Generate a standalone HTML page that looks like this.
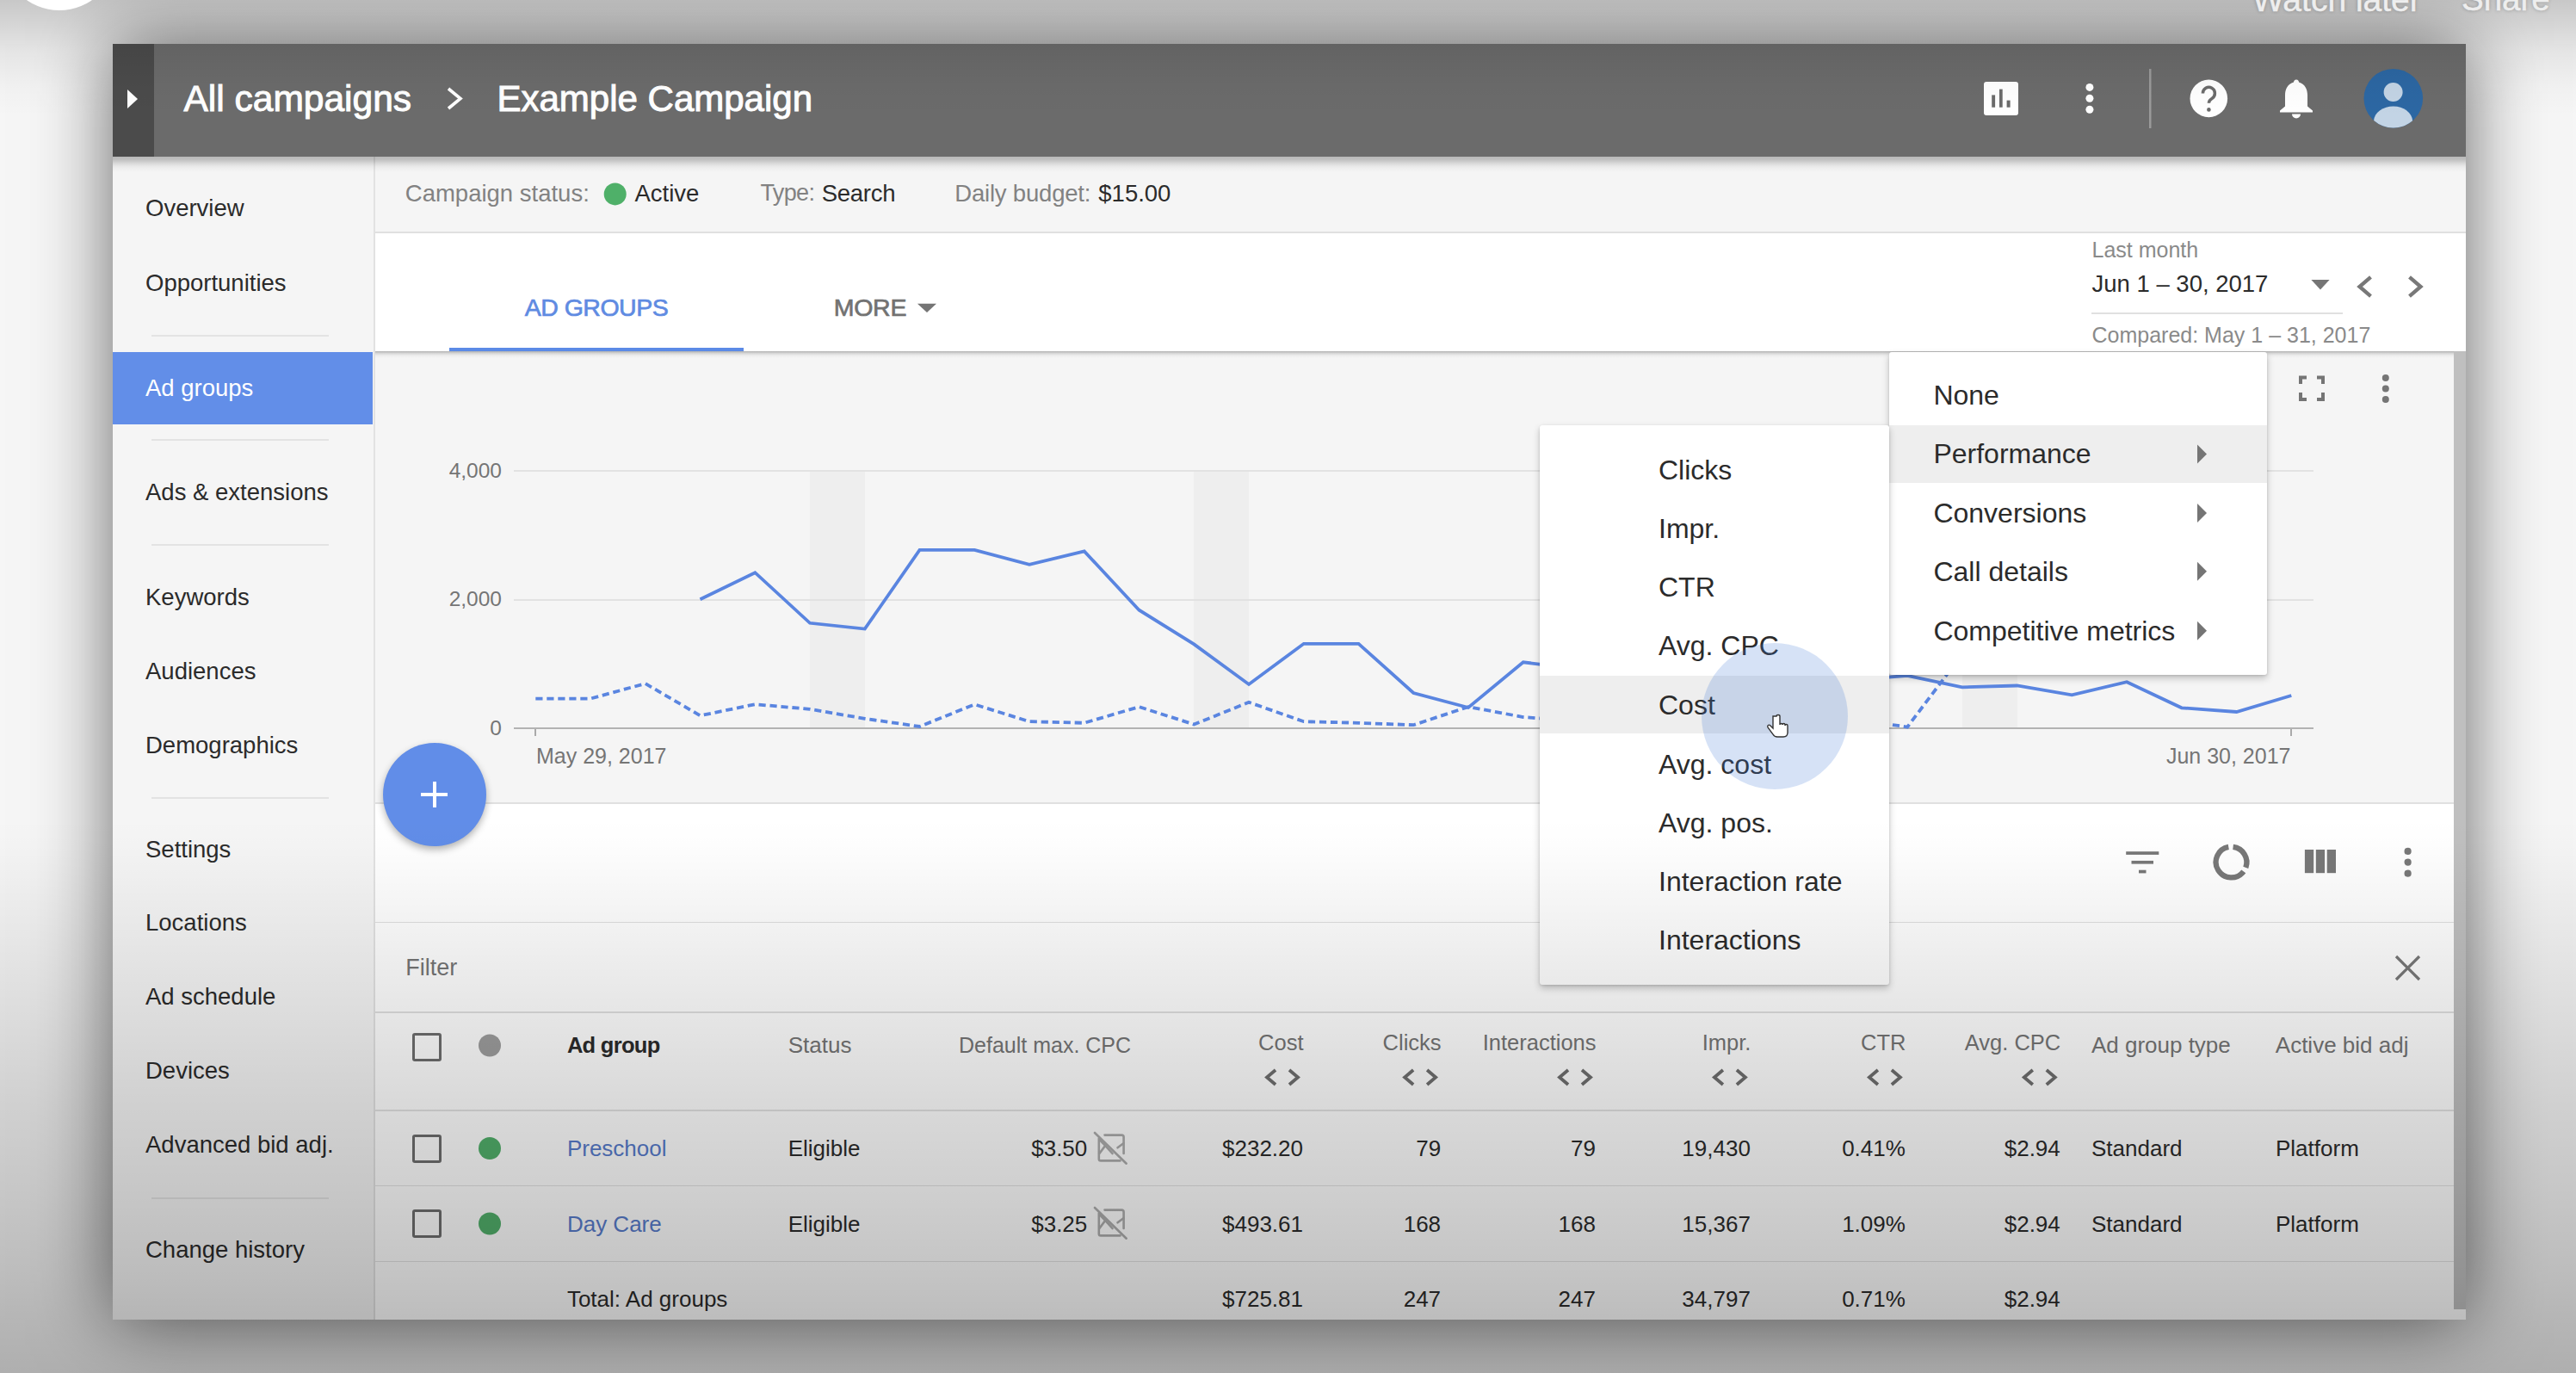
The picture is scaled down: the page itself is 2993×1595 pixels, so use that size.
<!DOCTYPE html><html><head><meta charset="utf-8"><style>
html,body{margin:0;padding:0;}
body{width:2993px;height:1595px;overflow:hidden;position:relative;background:#f6f6f6;font-family:"Liberation Sans",sans-serif;}
.t{position:absolute;line-height:1;white-space:nowrap;}
.r{position:absolute;}
svg{position:absolute;overflow:visible;}
</style></head><body>
<div class="r" style="left:131px;top:51px;width:2734px;height:1482px;background:#fff;box-shadow:0 0 84px rgba(0,0,0,0.59);"></div>
<div class="r" style="left:131px;top:51px;width:2734px;height:132px;background:#6b6b6b;"></div>
<div class="r" style="left:131px;top:51px;width:48px;height:132px;background:#4b4b4b;"></div>
<div class="r" style="left:131px;top:182px;width:303px;height:1351px;background:#f5f5f5;"></div>
<div class="r" style="left:434.3px;top:182px;width:1.5px;height:1351px;background:#e2e2e2;"></div>
<div class="r" style="left:436px;top:182px;width:2429px;height:88px;background:#f5f5f5;"></div>
<div class="r" style="left:436px;top:269px;width:2429px;height:2px;background:#e0e0e0;"></div>
<div class="r" style="left:436px;top:271px;width:2429px;height:137px;background:#ffffff;"></div>
<div class="r" style="left:436px;top:408px;width:2415px;height:525px;background:#f5f5f5;"></div>
<div class="r" style="left:436px;top:932px;width:2415px;height:2px;background:#e0e0e0;"></div>
<div class="r" style="left:436px;top:934px;width:2415px;height:137px;background:#ffffff;"></div>
<div class="r" style="left:436px;top:1071px;width:2415px;height:1.7999999999999545px;background:#e0e0e0;"></div>
<div class="r" style="left:436px;top:1072px;width:2415px;height:104px;background:#ffffff;"></div>
<div class="r" style="left:436px;top:1175px;width:2415px;height:2px;background:#e0e0e0;"></div>
<div class="r" style="left:436px;top:1177px;width:2415px;height:356px;background:#ffffff;"></div>
<div class="r" style="left:436px;top:1289px;width:2415px;height:1.599999999999909px;background:#e3e3e3;"></div>
<div class="r" style="left:436px;top:1376.5px;width:2415px;height:1.599999999999909px;background:#e3e3e3;"></div>
<div class="r" style="left:436px;top:1464.5px;width:2415px;height:1.599999999999909px;background:#e3e3e3;"></div>
<div class="r" style="left:2851px;top:408px;width:14px;height:1113px;background:#bfbfbf;"></div>
<div class="r" style="left:131px;top:182px;width:2734px;height:19px;background:linear-gradient(rgba(0,0,0,0.25),rgba(0,0,0,0.22) 3px,rgba(0,0,0,0.185) 5px,rgba(0,0,0,0.135) 7px,rgba(0,0,0,0.09) 9px,rgba(0,0,0,0.055) 11px,rgba(0,0,0,0.03) 13px,rgba(0,0,0,0.01) 16px,rgba(0,0,0,0) 19px);"></div>
<div class="r" style="left:436px;top:408px;width:2415px;height:8px;background:linear-gradient(rgba(0,0,0,0.28),rgba(0,0,0,0.12) 2.5px,rgba(0,0,0,0.03) 5px,rgba(0,0,0,0) 8px);"></div>
<svg style="left:0;top:0" width="1" height="1"><polygon points="148,104 160,115 148,126" fill="#fff"/></svg>
<div class="t" style="left:213.5px;top:93.9px;font-size:42.5px;color:#fff;font-weight:normal;-webkit-text-stroke:1px #fff;">All campaigns</div>
<svg style="left:0;top:0" width="1" height="1"><polyline points="521,103 535,114.5 521,126" fill="none" stroke="#fff" stroke-width="3.6"/></svg>
<div class="t" style="left:577.5px;top:94.4px;font-size:42px;color:#fff;font-weight:normal;-webkit-text-stroke:1px #fff;">Example Campaign</div>
<svg style="left:0;top:0" width="1" height="1">
<rect x="2305" y="95" width="40" height="39" rx="3" fill="#fff"/>
<rect x="2314.2" y="110.4" width="3.9" height="14.3" fill="#6b6b6b"/>
<rect x="2323" y="103.6" width="3.7" height="21.1" fill="#6b6b6b"/>
<rect x="2331.6" y="116.6" width="4" height="8.1" fill="#6b6b6b"/>
<circle cx="2427.9" cy="101.4" r="4.5" fill="#fff"/><circle cx="2427.9" cy="114.3" r="4.5" fill="#fff"/><circle cx="2427.9" cy="127.2" r="4.5" fill="#fff"/>
<rect x="2497" y="80" width="2.5" height="69" fill="#9a9a9a"/>
<circle cx="2566.3" cy="114.4" r="21.8" fill="#fff"/>
<path d="M2559.4 108.4 a7 7 0 1 1 10.6 6 c-2.3 1.4 -3.6 2.6 -3.6 5.4" fill="none" stroke="#6b6b6b" stroke-width="3.5"/>
<circle cx="2566.4" cy="127.4" r="2.3" fill="#6b6b6b"/>
<path d="M2668 92.5 c2 0 3 1.5 3 3 c7 2 10 8 10 15 v13 l6 5 v2 h-38 v-2 l6 -5 v-13 c0 -7 3 -13 10 -15 c0 -1.5 1 -3 3 -3z" fill="#fff"/>
<path d="M2663 132.5 h10 a5 5 0 0 1 -10 0z" fill="#fff"/>
<circle cx="2780.8" cy="114.3" r="34.3" fill="#2c67a3"/>
<circle cx="2780.6" cy="107" r="11" fill="#c3d4e5"/><path d="M2758.13 140.04 A22.5 17.5 0 0 1 2803.09 140.37 A34.3 34.3 0 0 1 2758.13 140.04Z" fill="#c3d4e5"/>
</svg>
<div class="t" style="left:169.0px;top:228.0px;font-size:27.5px;color:#2b2b2b;font-weight:normal;">Overview</div>
<div class="t" style="left:169.0px;top:314.7px;font-size:27.5px;color:#2b2b2b;font-weight:normal;">Opportunities</div>
<div class="t" style="left:169.0px;top:557.7px;font-size:27.5px;color:#2b2b2b;font-weight:normal;">Ads &amp; extensions</div>
<div class="t" style="left:169.0px;top:680.4px;font-size:27.5px;color:#2b2b2b;font-weight:normal;">Keywords</div>
<div class="t" style="left:169.0px;top:766.2px;font-size:27.5px;color:#2b2b2b;font-weight:normal;">Audiences</div>
<div class="t" style="left:169.0px;top:851.7px;font-size:27.5px;color:#2b2b2b;font-weight:normal;">Demographics</div>
<div class="t" style="left:169.0px;top:972.6px;font-size:27.5px;color:#2b2b2b;font-weight:normal;">Settings</div>
<div class="t" style="left:169.0px;top:1058.4px;font-size:27.5px;color:#2b2b2b;font-weight:normal;">Locations</div>
<div class="t" style="left:169.0px;top:1144.2px;font-size:27.5px;color:#2b2b2b;font-weight:normal;">Ad schedule</div>
<div class="t" style="left:169.0px;top:1230.0px;font-size:27.5px;color:#2b2b2b;font-weight:normal;">Devices</div>
<div class="t" style="left:169.0px;top:1315.7px;font-size:27.5px;color:#2b2b2b;font-weight:normal;">Advanced bid adj.</div>
<div class="t" style="left:169.0px;top:1437.7px;font-size:27.5px;color:#2b2b2b;font-weight:normal;">Change history</div>
<div class="r" style="left:131px;top:409px;width:302px;height:84px;background:#628ee8;"></div>
<div class="t" style="left:169.0px;top:436.7px;font-size:27.5px;color:#fff;font-weight:normal;">Ad groups</div>
<div class="r" style="left:176px;top:389px;width:206px;height:2px;background:#e3e3e3;"></div>
<div class="r" style="left:176px;top:510px;width:206px;height:2px;background:#e3e3e3;"></div>
<div class="r" style="left:176px;top:632px;width:206px;height:2px;background:#e3e3e3;"></div>
<div class="r" style="left:176px;top:926px;width:206px;height:2px;background:#e3e3e3;"></div>
<div class="r" style="left:176px;top:1391px;width:206px;height:2px;background:#e3e3e3;"></div>
<div class="t" style="left:470.8px;top:210.9px;font-size:27.5px;color:#828282;font-weight:normal;">Campaign status:</div>
<svg style="left:0;top:0" width="1" height="1"><circle cx="714.7" cy="225.4" r="13" fill="#4fb069"/></svg>
<div class="t" style="left:737.5px;top:210.9px;font-size:27.5px;color:#2b2b2b;font-weight:normal;">Active</div>
<div class="t" style="left:883.4px;top:211.3px;font-size:27px;color:#828282;font-weight:normal;letter-spacing:-0.6px;">Type:</div>
<div class="t" style="left:954.8px;top:210.9px;font-size:27.5px;color:#2b2b2b;font-weight:normal;letter-spacing:-0.3px;">Search</div>
<div class="t" style="left:1109.3px;top:210.9px;font-size:27.5px;color:#828282;font-weight:normal;letter-spacing:-0.2px;">Daily budget:</div>
<div class="t" style="left:1276.3px;top:210.9px;font-size:27.5px;color:#2b2b2b;font-weight:normal;">$15.00</div>
<div class="t" style="left:609.7px;top:342.9px;font-size:28.5px;color:#5f8be2;font-weight:normal;-webkit-text-stroke:0.7px #5f8be2;letter-spacing:-0.5px;">AD GROUPS</div>
<div class="t" style="left:968.8px;top:342.9px;font-size:28.5px;color:#727272;font-weight:normal;-webkit-text-stroke:0.7px #727272;letter-spacing:-0.3px;">MORE</div>
<svg style="left:0;top:0" width="1" height="1"><polygon points="1065.9,352.7 1088,352.7 1077,363" fill="#757575"/></svg>
<div class="r" style="left:522px;top:404px;width:342px;height:4px;background:#5b8ae6;"></div>
<div class="t" style="left:2430.5px;top:277.7px;font-size:25px;color:#8a8a8a;font-weight:normal;">Last month</div>
<div class="t" style="left:2430.5px;top:315.5px;font-size:27.5px;color:#2b2b2b;font-weight:normal;">Jun 1 – 30, 2017</div>
<svg style="left:0;top:0" width="1" height="1"><polygon points="2685.4,325 2706.6,325 2696,336.6" fill="#757575"/><polyline points="2754.5,321.8 2741.5,333 2754.5,344.2" fill="none" stroke="#787878" stroke-width="4.3"/><polyline points="2799.5,321.8 2812.5,333 2799.5,344.2" fill="none" stroke="#787878" stroke-width="4.3"/></svg>
<div class="r" style="left:2430px;top:363px;width:292px;height:2px;background:#e0e0e0;"></div>
<div class="t" style="left:2430.5px;top:377.4px;font-size:25px;color:#8a8a8a;font-weight:normal;">Compared: May 1 – 31, 2017</div>
<div class="r" style="left:941px;top:547px;width:64px;height:299px;background:#eeeeee;"></div>
<div class="r" style="left:1387px;top:547px;width:64px;height:299px;background:#eeeeee;"></div>
<div class="r" style="left:1834px;top:547px;width:63px;height:299px;background:#eeeeee;"></div>
<div class="r" style="left:2280px;top:547px;width:64px;height:299px;background:#eeeeee;"></div>
<div class="r" style="left:597px;top:546px;width:2091px;height:2px;background:#e2e2e2;"></div>
<div class="r" style="left:597px;top:696px;width:2091px;height:2px;background:#e2e2e2;"></div>
<div class="r" style="left:597px;top:845.3px;width:2091px;height:2.2000000000000455px;background:#b3b3b3;"></div>
<div class="r" style="left:621px;top:847px;width:2px;height:8px;background:#aaaaaa;"></div>
<div class="r" style="left:2661px;top:847px;width:2px;height:8px;background:#aaaaaa;"></div>
<div class="t" style="left:-417.0px;width:1000px;text-align:right;top:534.9px;font-size:24.5px;color:#757575;font-weight:normal;">4,000</div>
<div class="t" style="left:-417.0px;width:1000px;text-align:right;top:684.3px;font-size:24.5px;color:#757575;font-weight:normal;">2,000</div>
<div class="t" style="left:-417.0px;width:1000px;text-align:right;top:834.3px;font-size:24.5px;color:#757575;font-weight:normal;">0</div>
<div class="t" style="left:623.0px;top:866.0px;font-size:25px;color:#757575;font-weight:normal;">May 29, 2017</div>
<div class="t" style="left:1661.5px;width:1000px;text-align:right;top:865.5px;font-size:25px;color:#757575;font-weight:normal;">Jun 30, 2017</div>
<svg style="left:0;top:0" width="1" height="1"><polyline points="813.5,696.3 877.3,665.2 941.0,723.8 1004.8,730.6 1068.5,638.8 1132.3,638.8 1196.0,655.9 1259.8,640.4 1323.5,708.7 1387.3,748.4 1451.0,795 1514.8,747.8 1578.5,747.8 1642.3,805 1706.0,822 1769.8,769.3 1833.5,777 1897.3,790 1961.0,785 2024.8,792 2088.6,780 2152.3,790 2216.1,784.8 2279.8,798.4 2343.6,796.5 2407.3,807.4 2471.1,792.2 2534.8,822.3 2598.6,827 2662.3,808" fill="none" stroke="#5a85e0" stroke-width="3.8" stroke-linejoin="miter"/><polyline points="622.3,811.6 686.0,811.6 749.8,794.1 813.5,831.3 877.3,818.2 941.0,823.8 1004.8,834.8 1068.5,844 1132.3,818.3 1196.0,838.2 1259.8,839.8 1323.5,821.1 1387.3,841.6 1451.0,815.8 1514.8,838.2 1578.5,839.8 1642.3,842.2 1706.0,821.1 1769.8,833 1833.5,838 1897.3,820 1961.0,836 2024.8,840 2088.6,838 2152.3,835 2216.1,844.6 2279.8,760 2343.6,700 2407.3,700 2471.1,700" fill="none" stroke="#5a85e0" stroke-width="3.8" stroke-dasharray="8.2,4.8"/></svg>
<svg style="left:0;top:0" width="1" height="1"><g fill="none" stroke="#757575" stroke-width="4">
<polyline points="2673,446 2673,438.6 2680,438.6"/><polyline points="2692,438.6 2699,438.6 2699,446"/>
<polyline points="2673,456 2673,464 2680,464"/><polyline points="2692,464 2699,464 2699,456"/></g>
<circle cx="2771.8" cy="439" r="4" fill="#757575"/><circle cx="2771.8" cy="451.5" r="4" fill="#757575"/><circle cx="2771.8" cy="464" r="4" fill="#757575"/></svg>
<div class="r" style="left:444.6px;top:863px;width:120px;height:120px;border-radius:50%;background:#618de8;box-shadow:0 4px 8px rgba(0,0,0,0.3);"></div>
<div class="r" style="left:489px;top:921px;width:31px;height:4px;background:#fff;"></div>
<div class="r" style="left:502.5px;top:908px;width:4.0px;height:30px;background:#fff;"></div>
<svg style="left:0;top:0" width="1" height="1">
<rect x="2470.2" y="989.2" width="38.1" height="3.7" fill="#787878"/><rect x="2476.5" y="999.9" width="25.5" height="3.7" fill="#787878"/><rect x="2485" y="1010.7" width="8.5" height="3.7" fill="#787878"/>
<path d="M2589.3 983.9 A17.9 17.9 0 1 0 2606.8 1012.3" fill="none" stroke="#787878" stroke-width="6.3"/>
<path d="M2594.6 983.9 A17.9 17.9 0 0 1 2609.3 1007.8" fill="none" stroke="#787878" stroke-width="6.3"/>
<rect x="2677.9" y="987" width="10.3" height="27.2" fill="#787878"/><rect x="2690.8" y="987" width="10.3" height="27.2" fill="#787878"/><rect x="2703.7" y="987" width="10.3" height="27.2" fill="#787878"/>
<circle cx="2797.6" cy="988.9" r="4.1" fill="#787878"/><circle cx="2797.6" cy="1001.7" r="4.1" fill="#787878"/><circle cx="2797.6" cy="1014.7" r="4.1" fill="#787878"/>
<g stroke="#787878" stroke-width="3.2"><line x1="2784" y1="1111" x2="2811" y2="1138"/><line x1="2811" y1="1111" x2="2784" y2="1138"/></g>
</svg>
<div class="t" style="left:471.2px;top:1110.6px;font-size:27px;color:#757575;font-weight:normal;">Filter</div>
<div class="r" style="left:479px;top:1199.5px;width:28px;height:27px;border:3.2px solid #6e6e6e;border-radius:3px;"></div>
<svg style="left:0;top:0" width="1" height="1"><circle cx="569" cy="1214.5" r="13" fill="#9e9e9e"/><circle cx="569" cy="1334" r="13" fill="#52b06b"/><circle cx="569" cy="1421.5" r="13" fill="#52b06b"/></svg>
<div class="t" style="left:658.9px;top:1201.7px;font-size:25.5px;color:#2b2b2b;font-weight:bold;letter-spacing:-0.7px;">Ad group</div>
<div class="t" style="left:915.7px;top:1201.3px;font-size:26px;color:#757575;font-weight:normal;">Status</div>
<div class="t" style="left:1114.0px;top:1202.1px;font-size:25px;color:#757575;font-weight:normal;">Default max. CPC</div>
<div class="t" style="left:514.5px;width:1000px;text-align:right;top:1198.6px;font-size:25.5px;color:#757575;font-weight:normal;">Cost</div>
<div class="t" style="left:674.6px;width:1000px;text-align:right;top:1198.6px;font-size:25.5px;color:#757575;font-weight:normal;">Clicks</div>
<div class="t" style="left:854.5px;width:1000px;text-align:right;top:1198.6px;font-size:25.5px;color:#757575;font-weight:normal;">Interactions</div>
<div class="t" style="left:1034.4px;width:1000px;text-align:right;top:1198.6px;font-size:25.5px;color:#757575;font-weight:normal;">Impr.</div>
<div class="t" style="left:1214.4px;width:1000px;text-align:right;top:1198.6px;font-size:25.5px;color:#757575;font-weight:normal;">CTR</div>
<div class="t" style="left:1394.3px;width:1000px;text-align:right;top:1198.6px;font-size:25.5px;color:#757575;font-weight:normal;">Avg. CPC</div>
<svg style="left:0;top:0" width="1" height="1"><polyline points="1482.0,1243 1472.0,1251.5 1482.0,1260" fill="none" stroke="#6f6f6f" stroke-width="3.8"/><polyline points="1498.0,1243 1508.0,1251.5 1498.0,1260" fill="none" stroke="#6f6f6f" stroke-width="3.8"/><polyline points="1642.1,1243 1632.1,1251.5 1642.1,1260" fill="none" stroke="#6f6f6f" stroke-width="3.8"/><polyline points="1658.1,1243 1668.1,1251.5 1658.1,1260" fill="none" stroke="#6f6f6f" stroke-width="3.8"/><polyline points="1822.0,1243 1812.0,1251.5 1822.0,1260" fill="none" stroke="#6f6f6f" stroke-width="3.8"/><polyline points="1838.0,1243 1848.0,1251.5 1838.0,1260" fill="none" stroke="#6f6f6f" stroke-width="3.8"/><polyline points="2001.9,1243 1991.9,1251.5 2001.9,1260" fill="none" stroke="#6f6f6f" stroke-width="3.8"/><polyline points="2017.9,1243 2027.9,1251.5 2017.9,1260" fill="none" stroke="#6f6f6f" stroke-width="3.8"/><polyline points="2181.9,1243 2171.9,1251.5 2181.9,1260" fill="none" stroke="#6f6f6f" stroke-width="3.8"/><polyline points="2197.9,1243 2207.9,1251.5 2197.9,1260" fill="none" stroke="#6f6f6f" stroke-width="3.8"/><polyline points="2361.8,1243 2351.8,1251.5 2361.8,1260" fill="none" stroke="#6f6f6f" stroke-width="3.8"/><polyline points="2377.8,1243 2387.8,1251.5 2377.8,1260" fill="none" stroke="#6f6f6f" stroke-width="3.8"/></svg>
<div class="t" style="left:2429.9px;top:1201.0px;font-size:26px;color:#757575;font-weight:normal;">Ad group type</div>
<div class="t" style="left:2643.8px;top:1201.0px;font-size:26px;color:#757575;font-weight:normal;">Active bid adj</div>
<div class="r" style="left:479px;top:1318px;width:28px;height:27px;border:3.2px solid #6e6e6e;border-radius:3px;"></div>
<div class="t" style="left:658.9px;top:1321.3px;font-size:26px;color:#587ccc;font-weight:normal;">Preschool</div>
<div class="t" style="left:915.7px;top:1321.3px;font-size:26px;color:#2b2b2b;font-weight:normal;">Eligible</div>
<div class="t" style="left:263.3px;width:1000px;text-align:right;top:1321.3px;font-size:26px;color:#2b2b2b;font-weight:normal;">$3.50</div>
<div class="t" style="left:514.0px;width:1000px;text-align:right;top:1321.3px;font-size:26px;color:#2b2b2b;font-weight:normal;">$232.20</div>
<div class="t" style="left:674.1px;width:1000px;text-align:right;top:1321.3px;font-size:26px;color:#2b2b2b;font-weight:normal;">79</div>
<div class="t" style="left:854.0px;width:1000px;text-align:right;top:1321.3px;font-size:26px;color:#2b2b2b;font-weight:normal;">79</div>
<div class="t" style="left:1033.9px;width:1000px;text-align:right;top:1321.3px;font-size:26px;color:#2b2b2b;font-weight:normal;">19,430</div>
<div class="t" style="left:1213.9px;width:1000px;text-align:right;top:1321.3px;font-size:26px;color:#2b2b2b;font-weight:normal;">0.41%</div>
<div class="t" style="left:1393.8px;width:1000px;text-align:right;top:1321.3px;font-size:26px;color:#2b2b2b;font-weight:normal;">$2.94</div>
<div class="t" style="left:2430.0px;top:1321.3px;font-size:26px;color:#2b2b2b;font-weight:normal;">Standard</div>
<div class="t" style="left:2644.0px;top:1321.3px;font-size:26px;color:#2b2b2b;font-weight:normal;">Platform</div>
<svg style="left:0;top:0px" width="1" height="1"><g fill="none" stroke="#adadad" stroke-width="2.6" stroke-linecap="round"><path d="M1283.5 1318.6 H1303.3 a2.3 2.3 0 0 1 2.3 2.3 V1340"/><path d="M1276.8 1322.5 V1346.2 a2.2 2.2 0 0 0 2.2 2.2 H1301.5"/><path d="M1277.2 1340.2 L1284.2 1330.8 L1277.2 1323.6"/><path d="M1284.2 1330.8 L1292.5 1340"/><path d="M1298.5 1333.3 L1305.3 1328.2"/><line x1="1272" y1="1316" x2="1308.7" y2="1351.7"/></g></svg>
<div class="r" style="left:479px;top:1405.3px;width:28px;height:27px;border:3.2px solid #6e6e6e;border-radius:3px;"></div>
<div class="t" style="left:658.9px;top:1409.3px;font-size:26px;color:#587ccc;font-weight:normal;">Day Care</div>
<div class="t" style="left:915.7px;top:1409.3px;font-size:26px;color:#2b2b2b;font-weight:normal;">Eligible</div>
<div class="t" style="left:263.3px;width:1000px;text-align:right;top:1409.3px;font-size:26px;color:#2b2b2b;font-weight:normal;">$3.25</div>
<div class="t" style="left:514.0px;width:1000px;text-align:right;top:1409.3px;font-size:26px;color:#2b2b2b;font-weight:normal;">$493.61</div>
<div class="t" style="left:674.1px;width:1000px;text-align:right;top:1409.3px;font-size:26px;color:#2b2b2b;font-weight:normal;">168</div>
<div class="t" style="left:854.0px;width:1000px;text-align:right;top:1409.3px;font-size:26px;color:#2b2b2b;font-weight:normal;">168</div>
<div class="t" style="left:1033.9px;width:1000px;text-align:right;top:1409.3px;font-size:26px;color:#2b2b2b;font-weight:normal;">15,367</div>
<div class="t" style="left:1213.9px;width:1000px;text-align:right;top:1409.3px;font-size:26px;color:#2b2b2b;font-weight:normal;">1.09%</div>
<div class="t" style="left:1393.8px;width:1000px;text-align:right;top:1409.3px;font-size:26px;color:#2b2b2b;font-weight:normal;">$2.94</div>
<div class="t" style="left:2430.0px;top:1409.3px;font-size:26px;color:#2b2b2b;font-weight:normal;">Standard</div>
<div class="t" style="left:2644.0px;top:1409.3px;font-size:26px;color:#2b2b2b;font-weight:normal;">Platform</div>
<svg style="left:0;top:87.29999999999995px" width="1" height="1"><g fill="none" stroke="#adadad" stroke-width="2.6" stroke-linecap="round"><path d="M1283.5 1318.6 H1303.3 a2.3 2.3 0 0 1 2.3 2.3 V1340"/><path d="M1276.8 1322.5 V1346.2 a2.2 2.2 0 0 0 2.2 2.2 H1301.5"/><path d="M1277.2 1340.2 L1284.2 1330.8 L1277.2 1323.6"/><path d="M1284.2 1330.8 L1292.5 1340"/><path d="M1298.5 1333.3 L1305.3 1328.2"/><line x1="1272" y1="1316" x2="1308.7" y2="1351.7"/></g></svg>
<div class="t" style="left:658.9px;top:1496.3px;font-size:26px;color:#2b2b2b;font-weight:normal;">Total: Ad groups</div>
<div class="t" style="left:514.0px;width:1000px;text-align:right;top:1496.3px;font-size:26px;color:#2b2b2b;font-weight:normal;">$725.81</div>
<div class="t" style="left:674.1px;width:1000px;text-align:right;top:1496.3px;font-size:26px;color:#2b2b2b;font-weight:normal;">247</div>
<div class="t" style="left:854.0px;width:1000px;text-align:right;top:1496.3px;font-size:26px;color:#2b2b2b;font-weight:normal;">247</div>
<div class="t" style="left:1033.9px;width:1000px;text-align:right;top:1496.3px;font-size:26px;color:#2b2b2b;font-weight:normal;">34,797</div>
<div class="t" style="left:1213.9px;width:1000px;text-align:right;top:1496.3px;font-size:26px;color:#2b2b2b;font-weight:normal;">0.71%</div>
<div class="t" style="left:1393.8px;width:1000px;text-align:right;top:1496.3px;font-size:26px;color:#2b2b2b;font-weight:normal;">$2.94</div>
<div class="r" style="left:2194.6px;top:408.7px;width:439.9000000000001px;height:375.3px;background:#fff;border-radius:3px;box-shadow:0 4px 8px rgba(0,0,0,0.22),0 1px 3px rgba(0,0,0,0.12);"></div>
<div class="r" style="left:2194.6px;top:493.8px;width:439.9000000000001px;height:67.30000000000001px;background:#eeeeee;"></div>
<div class="t" style="left:2246.4px;top:442.9px;font-size:32px;color:#2b2b2b;font-weight:normal;">None</div>
<div class="t" style="left:2246.4px;top:511.3px;font-size:32px;color:#2b2b2b;font-weight:normal;">Performance</div>
<div class="t" style="left:2246.4px;top:579.8px;font-size:32px;color:#2b2b2b;font-weight:normal;">Conversions</div>
<div class="t" style="left:2246.4px;top:647.7px;font-size:32px;color:#2b2b2b;font-weight:normal;">Call details</div>
<div class="t" style="left:2246.4px;top:716.7px;font-size:32px;color:#2b2b2b;font-weight:normal;">Competitive metrics</div>
<svg style="left:0;top:0" width="1" height="1"><polygon points="2553,516.4 2564,527.4 2553,538.4" fill="#757575"/><polygon points="2553,584.9 2564,595.9 2553,606.9" fill="#757575"/><polygon points="2553,652.8 2564,663.8 2553,674.8" fill="#757575"/><polygon points="2553,721.8 2564,732.8 2553,743.8" fill="#757575"/></svg>
<div class="r" style="left:1788.8px;top:493.9px;width:406.20000000000005px;height:649.9px;background:#fff;border-radius:3px;box-shadow:0 4px 8px rgba(0,0,0,0.22),0 1px 3px rgba(0,0,0,0.12);"></div>
<div class="r" style="left:1788.8px;top:784.7px;width:406.20000000000005px;height:67.79999999999995px;background:#eeeeee;"></div>
<div class="t" style="left:1927.0px;top:529.7px;font-size:32px;color:#2b2b2b;font-weight:normal;">Clicks</div>
<div class="t" style="left:1927.0px;top:597.6px;font-size:32px;color:#2b2b2b;font-weight:normal;">Impr.</div>
<div class="t" style="left:1927.0px;top:665.9px;font-size:32px;color:#2b2b2b;font-weight:normal;">CTR</div>
<div class="t" style="left:1927.0px;top:734.3px;font-size:32px;color:#2b2b2b;font-weight:normal;">Avg. CPC</div>
<div class="t" style="left:1927.0px;top:803.1px;font-size:32px;color:#2b2b2b;font-weight:normal;">Cost</div>
<div class="t" style="left:1927.0px;top:871.5px;font-size:32px;color:#2b2b2b;font-weight:normal;">Avg. cost</div>
<div class="t" style="left:1927.0px;top:939.9px;font-size:32px;color:#2b2b2b;font-weight:normal;">Avg. pos.</div>
<div class="t" style="left:1927.0px;top:1007.7px;font-size:32px;color:#2b2b2b;font-weight:normal;">Interaction rate</div>
<div class="t" style="left:1927.0px;top:1076.1px;font-size:32px;color:#2b2b2b;font-weight:normal;">Interactions</div>
<div class="r" style="left:1977px;top:747px;width:170px;height:170px;border-radius:50%;background:rgba(69,123,214,0.22);"></div>
<svg style="left:0;top:0" width="1" height="1"><path d="M2060 832 v14 l-3 -3 c-2 -2 -4 0 -3 2 l6 8 c1 2 3 3 5 3 h7 c3 0 5 -2 5 -5 v-8 c0 -2 -3 -2 -3 0 v-1 c0 -2 -3 -2 -3 0 c0 -2 -3 -2 -3 0 v-10 c0 -2 -4 -2 -4 0z" fill="#fff" stroke="#333" stroke-width="1.4"/></svg>
<div class="r" style="left:0px;top:0px;width:2993px;height:140px;background:linear-gradient(rgba(0,0,0,0.19) 0px,rgba(0,0,0,0.13) 30px,rgba(0,0,0,0.065) 60px,rgba(0,0,0,0.02) 100px,rgba(0,0,0,0) 135px);pointer-events:none;"></div>
<div class="r" style="left:0px;top:950px;width:2993px;height:645px;background:linear-gradient(rgba(0,0,0,0) 0px,rgba(0,0,0,0.008) 30px,rgba(0,0,0,0.055) 130px,rgba(0,0,0,0.10) 230px,rgba(0,0,0,0.15) 330px,rgba(0,0,0,0.19) 430px,rgba(0,0,0,0.23) 530px,rgba(0,0,0,0.26) 580px,rgba(0,0,0,0.29) 645px);pointer-events:none;"></div>
<div class="r" style="left:3px;top:-120px;width:132px;height:132px;border-radius:50%;background:#fff;"></div>
<div class="t" style="left:2617.0px;top:-20.2px;font-size:39px;color:#eeeeee;font-weight:normal;-webkit-text-stroke:0.5px #eee;text-shadow:0 0 4px rgba(0,0,0,0.3);">Watch later</div>
<div class="t" style="left:2860.0px;top:-19.8px;font-size:38.5px;color:#eeeeee;font-weight:normal;-webkit-text-stroke:0.5px #eee;text-shadow:0 0 4px rgba(0,0,0,0.3);">Share</div>
</body></html>
